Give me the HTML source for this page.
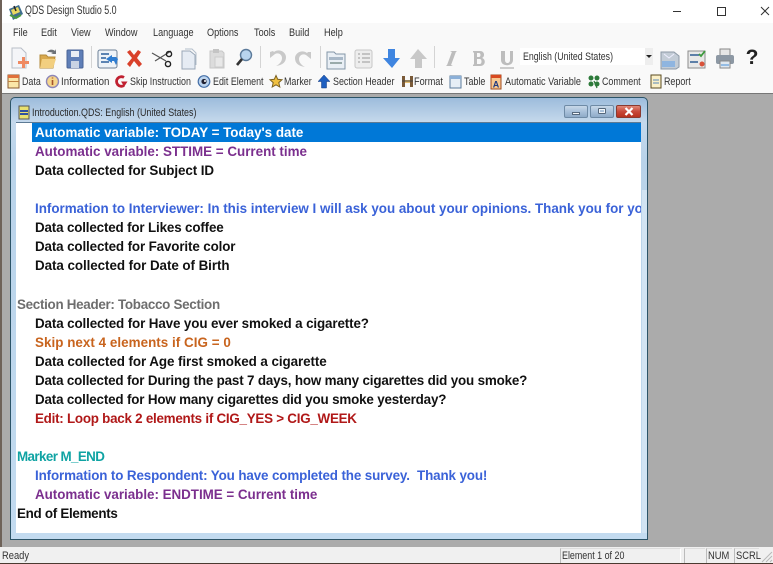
<!DOCTYPE html>
<html><head><meta charset="utf-8"><style>
html,body{margin:0;padding:0;width:773px;height:564px;overflow:hidden;background:#fff}
body{position:relative;font-family:"Liberation Sans",sans-serif;color:#222}
.a{position:absolute;white-space:nowrap}
.n{transform:scaleX(.85);transform-origin:0 0}
.m{top:26px;font-size:11px;line-height:14px;color:#333;transform:scaleX(.83);transform-origin:0 0}
.t{top:75px;font-size:11px;line-height:14px;color:#333;transform:scaleX(.81);transform-origin:0 0}
.l{left:35px;font-size:13.4px;font-weight:bold;line-height:19px;color:#111;letter-spacing:-.16px}
svg{position:absolute;overflow:visible}
.b{filter:blur(.35px)}
.sep{position:absolute;top:46px;width:1px;height:22px;background:#d4d4d4}
</style></head><body>
<div class="a" style="left:0;top:23px;width:773px;height:71px;background:#f9f9f9"></div>
<div class="a" style="left:0;top:0;width:2px;height:564px;background:#6e6259"></div>
<!-- title -->
<svg style="left:6px;top:3px" width="20" height="20" viewBox="0 0 20 20"><path d="M3 6l10-4 4 9-10 6z" fill="#3f6e8e"/><path d="M5 7l7-3 2 5-7 3z" fill="#e8d860"/><path d="M4 12l6 3 5-3" stroke="#4a9a40" stroke-width="2" fill="none"/><path d="M8 3l2 5" stroke="#222" stroke-width="1.5"/></svg>
<div class="a" style="left:25px;top:4px;font-size:11.5px;line-height:15px;color:#333;transform:scaleX(.77);transform-origin:0 0">QDS Design Studio 5.0</div>
<svg style="left:670px;top:0" width="103" height="23" fill="none" stroke="#333" stroke-width="1"><path d="M3 11.5h8"/><rect x="47.5" y="7.5" width="8" height="8"/><path d="M91 7l8 8M99 7l-8 8"/></svg>
<!-- menu -->
<div class="a m" style="left:13px">File</div><div class="a m" style="left:41px">Edit</div><div class="a m" style="left:71px">View</div><div class="a m" style="left:105px">Window</div><div class="a m" style="left:153px">Language</div><div class="a m" style="left:207px">Options</div><div class="a m" style="left:254px">Tools</div><div class="a m" style="left:289px">Build</div><div class="a m" style="left:324px">Help</div>
<!-- toolbar 1 -->
<div class="sep" style="left:91px"></div><div class="sep" style="left:260px"></div><div class="sep" style="left:320px"></div><div class="sep" style="left:434px"></div>
<svg class="b" style="left:0;top:44px" width="773" height="28" viewBox="0 0 773 28">
<path d="M12 4h9l5 5v15H12z" fill="#f4f5f8" stroke="#b9bec8"/><path d="M22 13h3v4h4v3h-4v4h-3v-4h-4v-3h4z" fill="#ef8a62"/>
<path d="M40 11h6l2 2h7l-2 11H40z" fill="#d9a94e" stroke="#b48a3c"/><path d="M42 15h14l-3 9H40z" fill="#f2cf80"/><path d="M47 8c2-3 6-3 8-1l1-2 0 5-5 0 2-1c-2-1-4-1-6-1z" fill="#6d7278"/>
<rect x="67" y="6" width="16" height="18" rx="1" fill="#5f7fb8" stroke="#4a6496"/><rect x="71" y="7" width="8" height="6" fill="#e8edf5"/><rect x="71" y="17" width="8" height="7" fill="#c9d3e4"/>
<rect x="98" y="6" width="19" height="18" rx="2" fill="#eef3f8" stroke="#6d8198"/><path d="M101 10h8M101 14h5M101 18h8" stroke="#2c5f9c" stroke-width="1.6"/><path d="M106 15l6-4v2h4l2 2-2 6-2-4h-2v2z" fill="#2e7cd0"/>
<path d="M127 8l3-2 4 5 4-5 3 2-4 6 5 6-3 3-5-6-4 6-3-3 5-6z" fill="#d9402a"/>
<path d="M152 9l14 8M171 7l-16 10" stroke="#555" stroke-width="1.2" fill="none"/><circle cx="169" cy="10" r="2.6" fill="none" stroke="#222" stroke-width="1.4"/><circle cx="168" cy="20" r="2.6" fill="none" stroke="#222" stroke-width="1.4"/>
<path d="M182 7h8l5 4v14h-13z" fill="#e6ecf4" stroke="#9aa8b8"/><path d="M185 5h7l4 4v12" fill="none" stroke="#b4bfcc"/>
<path d="M210 7h12l2 2v15h-14z" fill="#dcdcdc" stroke="#c8c8c8"/><rect x="213" y="5" width="6" height="4" fill="#c4c4c4"/><rect x="215" y="13" width="8" height="10" fill="#e8e8e8" stroke="#ccc"/>
<circle cx="246" cy="11" r="5.5" fill="#b8d4ee" stroke="#5b7a9a" stroke-width="1.4"/><path d="M242 15l-5 6" stroke="#333" stroke-width="2.6"/>
<path d="M270 8v6l5-4c4-2 7 1 7 4s-2 6-6 8c7-1 10-4 10-9s-7-9-12-5l-1-1z" fill="#c9c9c9"/>
<path d="M311 8v7l-5-4c-4-2-7 1-7 4s2 6 6 8c-7-1-10-4-10-9s7-9 12-5l1-1z" fill="#c9c9c9"/>
<path d="M327 8h7l2 2h9v15h-18z" fill="#e9eff5" stroke="#8496a8"/><path d="M329 13h14v3h-14z" fill="#a8b8c8"/><path d="M330 19h12" stroke="#9aa" stroke-width="2"/>
<rect x="355" y="6" width="17" height="18" rx="2" fill="#ededed" stroke="#c6c6c6"/><path d="M358 10h2M362 10h8M358 14h2M362 14h8M358 18h2M362 18h8" stroke="#aaa" stroke-width="1.3"/>
<path d="M388 5h7v9h5l-8 10-9-10h5z" fill="#3f85e0"/>
<path d="M418 5l9 10h-5v9h-7v-9h-5z" fill="#c8c8c8"/>
<path d="M449 7h6l-1 1-3 13 2 1h-7l1-1 3-13-2-1z" fill="#bdbdbd" transform="skewX(-8) translate(3,0)"/>
<path d="M473 7h7c5 0 5 6 2 7 4 1 4 8-2 8h-7v-1l1-1V9l-1-1zm4 2v4h2c2 0 2-4 0-4zm0 6v5h3c2 0 2-5 0-5z" fill="#bdbdbd"/>
<path d="M501 7h4v9c0 4 5 4 5 0V7h3v9c0 7-12 7-12 0z" fill="#bdbdbd"/><path d="M500 24h14" stroke="#bdbdbd" stroke-width="1.5"/>
<path d="M661 8h13l5 4 0 11-3 2h-15z" fill="#c3ccd6" stroke="#8d99a6"/><path d="M662 17h13v6h-13z" fill="#8fb5e0"/><path d="M664 10l5 4 5-4" stroke="#eef" fill="none"/>
<rect x="688" y="7" width="17" height="17" fill="#e8e8e8" stroke="#8c8c8c"/><path d="M690 11h9M690 18h8" stroke="#5d7fa8" stroke-width="2"/><path d="M699 10l2 2 4-5" stroke="#3d9a3d" stroke-width="1.8" fill="none"/><circle cx="702" cy="20" r="2.5" fill="#d9523a"/>
<rect x="720" y="5" width="10" height="7" fill="#e6e6e6" stroke="#888"/><rect x="716" y="11" width="18" height="9" rx="2" fill="#8d98a4"/><rect x="720" y="17" width="10" height="7" fill="#dfe7ef" stroke="#888"/><path d="M721 21h8" stroke="#4a90d9"/>
</svg>
<div class="a" style="left:752px;top:46px;transform:translateX(-50%);font-size:21px;line-height:24px;font-weight:bold;color:#222">?</div>
<div class="a" style="left:520px;top:48px;width:125px;height:17px;background:#fff"></div>
<div class="a" style="left:645px;top:48px;width:8px;height:17px;background:#eee"></div>
<div class="a" style="left:646px;top:55px;border:3px solid transparent;border-top:3px solid #222"></div>
<div class="a" style="left:523px;top:50px;font-size:11px;line-height:14px;color:#333;transform:scaleX(.8);transform-origin:0 0">English (United States)</div>
<!-- toolbar 2 -->
<svg class="b" style="left:0;top:72px" width="773" height="20" viewBox="0 0 773 20">
<rect x="8" y="3" width="11" height="13" fill="#fbe6a8" stroke="#8a5a30"/><rect x="8" y="3" width="11" height="3" fill="#e0703a"/><path d="M8 9.5h11" stroke="#c08040"/>
<circle cx="52.500" cy="9.500" r="6" fill="#f6d68c" stroke="#8d86b8" stroke-width="1.4"/><path d="M52.500 5.500v1M52.500 8v5" stroke="#a4532a" stroke-width="1.6"/>
<path d="M124 5.500a4.800 4.800 0 1 0 0 8" fill="none" stroke="#c02030" stroke-width="2.800"/><path d="M121 9.500h6.500l-3.200 5z" fill="#c02030"/>
<circle cx="204" cy="9.500" r="5.800" fill="#bcd4ee" stroke="#4670a8" stroke-width="1.200"/><circle cx="204" cy="9.500" r="2.600" fill="#223"/><circle cx="205" cy="9" r="1" fill="#fff"/>
<path d="M276 3.500l1.700 3.800 4.300.5-3.200 2.800 1 4.400-3.800-2.200-3.800 2.200 1-4.400-3.200-2.800 4.300-.5z" fill="#f0c040" stroke="#7a6020"/>
<path d="M324 3l6 6.500h-3.500V16h-5V9.500H318z" fill="#1e5fc0" stroke="#123a80" stroke-width=".5"/>
<path d="M402 4h3v11h-3zM410 4h3v11h-3z" fill="#7a5a38"/><path d="M405 8h5v3h-5z" fill="#e8c070"/><path d="M402 9h11" stroke="#444" stroke-width="1"/>
<rect x="450" y="4" width="11" height="12" fill="#e6eef6" stroke="#5a7a9c"/><rect x="450" y="4" width="11" height="3" fill="#8cb0d8"/>
<rect x="491" y="3" width="10" height="14" fill="#f8c890" stroke="#a04a20"/><rect x="491" y="3" width="10" height="3" fill="#d84a20"/><text x="496" y="15.500" font-family="Liberation Sans" font-size="9" font-weight="bold" text-anchor="middle" fill="#223a80">A</text>
<g fill="#2d7a3a"><circle cx="591" cy="6" r="2.500"/><circle cx="597" cy="6" r="2.500"/><circle cx="591" cy="12" r="2.500"/><circle cx="597" cy="12" r="2.500"/></g><path d="M594 9l3 7" stroke="#2d7a3a" stroke-width="1.200"/>
<rect x="651" y="3" width="10" height="13" fill="#fbf0c8" stroke="#5a4a20"/><path d="M653 8h6M653 11h6" stroke="#5a88b8"/>
</svg>
<div class="a t" style="left:22px">Data</div><div class="a t" style="left:61px;transform:scaleX(.88)">Information</div><div class="a t" style="left:130px">Skip Instruction</div><div class="a t" style="left:213px">Edit Element</div><div class="a t" style="left:284px">Marker</div><div class="a t" style="left:333px">Section Header</div><div class="a t" style="left:414px;transform:scaleX(.83)">Format</div><div class="a t" style="left:464px">Table</div><div class="a t" style="left:505px;transform:scaleX(.83)">Automatic Variable</div><div class="a t" style="left:602px">Comment</div><div class="a t" style="left:664px">Report</div>
<!-- MDI -->
<div class="a" style="left:2px;top:93px;width:771px;height:454px;background:#ababab;border-top:1px solid #777;box-sizing:border-box"></div>
<div class="a" style="left:10px;top:97px;width:638px;height:443px;box-sizing:border-box;border:1px solid #2c5468;border-radius:5px 5px 0 0;background:linear-gradient(#9dbcdc,#c5d9ec 24px,#b9d3ea 60px,#c3dbf0)"></div>
<svg style="left:18px;top:105px" width="12" height="15" viewBox="0 0 12 15"><rect x="1" y="1" width="10" height="13" fill="#e8e070" stroke="#555"/><path d="M2 6h8M2 9h8" stroke="#3050a0" stroke-width="2"/></svg>
<div class="a n" style="left:32px;top:106px;font-size:11px;line-height:14px;color:#2a2a2a;transform:scaleX(.81)">Introduction.QDS: English (United States)</div>
<!-- window buttons -->
<div class="a" style="left:564px;top:105px;width:24px;height:13px;box-sizing:border-box;border:1px solid #6f8ba6;border-radius:2px;background:linear-gradient(#c8d8e8,#a9c1da 50%,#8fabc8)"></div>
<div class="a" style="left:572px;top:112px;width:8px;height:3px;background:#f2f6fa;border:1px solid #55687c;box-sizing:border-box"></div>
<div class="a" style="left:590px;top:105px;width:24px;height:13px;box-sizing:border-box;border:1px solid #6f8ba6;border-radius:2px;background:linear-gradient(#c8d8e8,#a9c1da 50%,#8fabc8)"></div>
<div class="a" style="left:598px;top:108px;width:8px;height:6px;border:2px solid #f2f6fa;outline:1px solid #55687c;outline-offset:-1px;box-sizing:border-box;border-radius:1px"></div>
<div class="a" style="left:616px;top:105px;width:25px;height:13px;box-sizing:border-box;border:1px solid #8a3a30;border-radius:2px;background:linear-gradient(#e08878,#c8493a 50%,#b8321f)"></div>
<svg style="left:624px;top:107px" width="10" height="9"><path d="M1.500 1l7 7M8.500 1l-7 7" stroke="#fff" stroke-width="2.200"/></svg>
<!-- client -->
<div class="a" style="left:16px;top:122px;width:625px;height:411px;background:#fff;overflow:hidden;border-top:1px solid #5d7a94;box-sizing:border-box">
<div class="a" style="left:16px;top:0;width:609px;height:19px;background:#0078d7"></div>
</div>
<div class="a" style="left:642px;top:190px;width:5px;height:343px;background:#d2e4f3"></div>
<div style="position:absolute;left:0;top:0;width:641px;height:533px;overflow:hidden">
<div class="a l" style="top:123px;color:#fff;letter-spacing:-.01px">Automatic variable: TODAY = Today's date</div>
<div class="a l" style="top:142px;color:#7b2f8e;letter-spacing:0">Automatic variable: STTIME = Current time</div>
<div class="a l" style="top:161px;letter-spacing:-.09px">Data collected for Subject ID</div>
<div class="a l" style="top:199px;color:#3a62d8;letter-spacing:0">Information to Interviewer: In this interview I will ask you about your opinions. Thank you for your time.</div>
<div class="a l" style="top:218px">Data collected for Likes coffee</div>
<div class="a l" style="top:237px;letter-spacing:-.13px">Data collected for Favorite color</div>
<div class="a l" style="top:256px;letter-spacing:-.06px">Data collected for Date of Birth</div>
<div class="a l" style="top:295px;left:17px;color:#6e6e6e;letter-spacing:-.29px">Section Header: Tobacco Section</div>
<div class="a l" style="top:314px;letter-spacing:-.12px">Data collected for Have you ever smoked a cigarette?</div>
<div class="a l" style="top:333px;color:#c8641e;letter-spacing:.04px">Skip next 4 elements if CIG = 0</div>
<div class="a l" style="top:352px;letter-spacing:-.07px">Data collected for Age first smoked a cigarette</div>
<div class="a l" style="top:371px;letter-spacing:-.17px">Data collected for During the past 7 days, how many cigarettes did you smoke?</div>
<div class="a l" style="top:390px;letter-spacing:-.17px">Data collected for How many cigarettes did you smoke yesterday?</div>
<div class="a l" style="top:409px;color:#b01818;letter-spacing:-.25px">Edit: Loop back 2 elements if CIG_YES &gt; CIG_WEEK</div>
<div class="a l" style="top:447px;left:17px;color:#0fa3a3;letter-spacing:-.6px">Marker M_END</div>
<div class="a l" style="top:466px;color:#3a62d8;letter-spacing:-.12px">Information to Respondent: You have completed the survey.&nbsp; Thank you!</div>
<div class="a l" style="top:485px;color:#7b2f8e;letter-spacing:-.02px">Automatic variable: ENDTIME = Current time</div>
<div class="a l" style="top:504px;left:17px;letter-spacing:-.29px">End of Elements</div>
</div>
<!-- status -->
<div class="a" style="left:0;top:547px;width:773px;height:16px;background:#f0f0f0"></div>
<div class="a" style="left:0;top:563px;width:773px;height:1px;background:#4a3a30"></div>
<div class="a n" style="left:2px;top:549px;font-size:11px;line-height:14px;color:#333">Ready</div>
<div class="a" style="left:560px;top:548px;width:121px;height:15px;box-sizing:border-box;border-left:1px solid #bbb;border-top:1px solid #ddd;border-right:1px solid #fff"></div>
<div class="a" style="left:684px;top:548px;width:21px;height:15px;box-sizing:border-box;border-left:1px solid #bbb;border-top:1px solid #ddd"></div>
<div class="a" style="left:706px;top:548px;width:26px;height:15px;box-sizing:border-box;border-left:1px solid #bbb;border-top:1px solid #ddd"></div>
<div class="a" style="left:734px;top:548px;width:25px;height:15px;box-sizing:border-box;border-left:1px solid #bbb;border-top:1px solid #ddd"></div>
<div class="a n" style="left:562px;top:549px;font-size:11px;line-height:14px;color:#333;transform:scaleX(.81)">Element 1 of 20</div>
<div class="a n" style="left:708px;top:549px;font-size:11px;line-height:14px;color:#333">NUM</div>
<div class="a n" style="left:736px;top:549px;font-size:11px;line-height:14px;color:#333">SCRL</div>
<svg style="left:761px;top:551px" width="12" height="12"><path d="M11 1L1 11M11 5L5 11M11 9L9 11" stroke="#b8b8b8"/></svg>
</body></html>
